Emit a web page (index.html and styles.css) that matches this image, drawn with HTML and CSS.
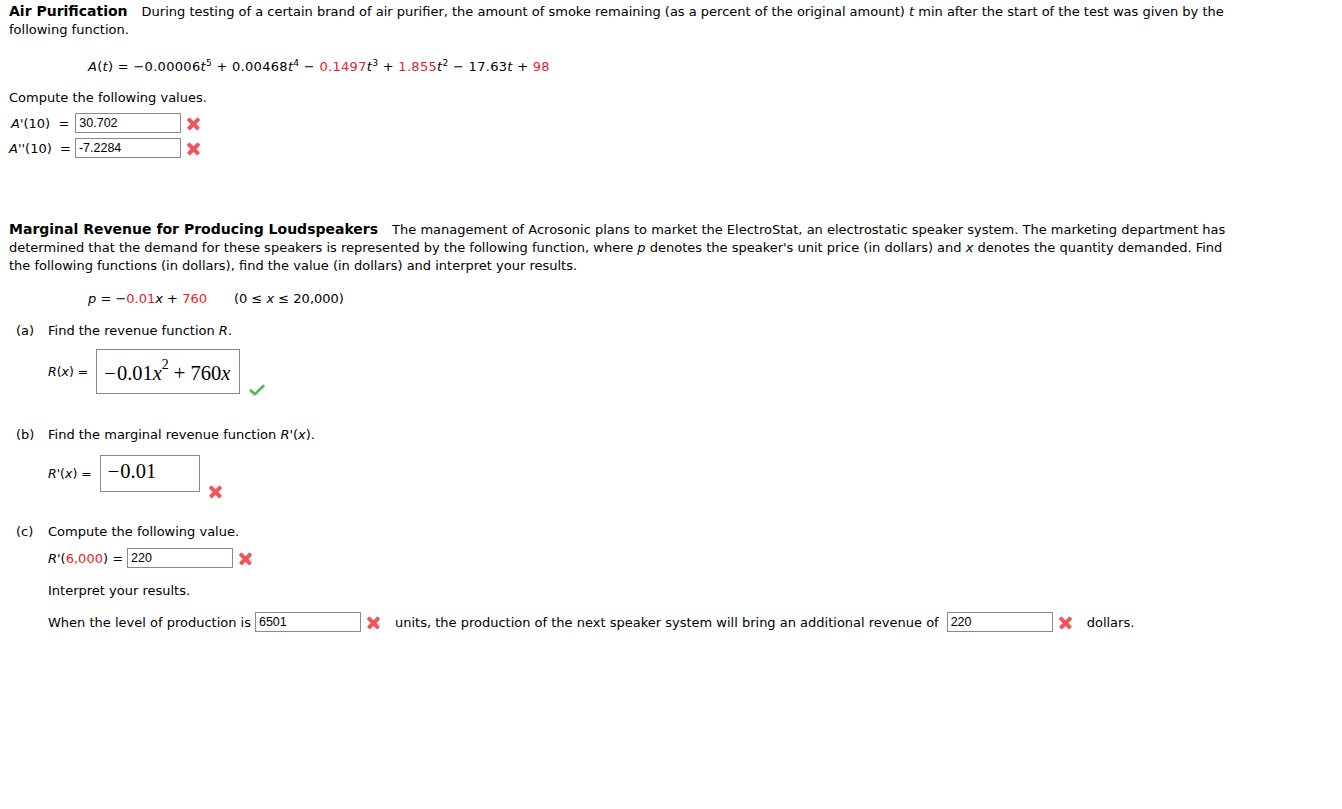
FILE: index.html
```html
<!DOCTYPE html>
<html>
<head>
<meta charset="utf-8">
<link rel="stylesheet" href="styles.css">
</head>
<body>
<div class="q">
  <p class="intro"><b class="title">Air Purification</b>During testing of a certain brand of air purifier, the amount of smoke remaining (as a percent of the original amount) <i>t</i> min after the start of the test was given by the following function.</p>
  <div class="formula f1"><i>A</i>(<i>t</i>) = −0.00006<i>t</i><sup>5</sup> + 0.00468<i>t</i><sup>4</sup> − <span class="red">0.1497</span><i>t</i><sup>3</sup> + <span class="red">1.855</span><i>t</i><sup>2</sup> − 17.63<i>t</i> + <span class="red">98</span></div>
  <p class="plain">Compute the following values.</p>
  <div class="row r1"><span class="lbl"><i>A</i>'(10)&nbsp; = </span><span class="inp w106">30.702</span><span class="x"></span></div>
  <div class="row r2"><span class="lbl"><i>A</i>''(10)&nbsp; = </span><span class="inp w106">-7.2284</span><span class="x"></span></div>
</div>

<div class="q q2">
  <p class="intro"><b class="title">Marginal Revenue for Producing Loudspeakers</b>The management of Acrosonic plans to market the ElectroStat, an electrostatic speaker system. The marketing department has determined that the demand for these speakers is represented by the following function, where <i>p</i> denotes the speaker's unit price (in dollars) and <i>x</i> denotes the quantity demanded. Find the following functions (in dollars), find the value (in dollars) and interpret your results.</p>
  <div class="formula f2"><span><i>p</i> = −<span class="red">0.01</span><i>x</i> + <span class="red">760</span></span><span class="range">(0 ≤ <i>x</i> ≤ 20,000)</span></div>

  <div class="part pa">
    <div class="ptitle"><span class="plab">(a)</span>Find the revenue function <i>R</i>.</div>
    <div class="mrow ma">
      <span class="sm"><i>R</i>(<i>x</i>) = </span>
      <span class="mbox ba"><span class="mm"><span class="op0">−</span>0.01<i>x</i><sup>2</sup><span class="op">+</span>760<i>x</i></span></span>
      <span class="chk"><svg width="16" height="12" viewBox="0 0 16 12"><path d="M1.8 6.6 L5.9 10.3 L14.3 2" fill="none" stroke="#5cb85c" stroke-width="2.8" stroke-linejoin="round" stroke-linecap="round"/></svg></span>
    </div>
  </div>

  <div class="part pb">
    <div class="ptitle"><span class="plab">(b)</span>Find the marginal revenue function <i>R</i>'(<i>x</i>).</div>
    <div class="mrow mb">
      <span class="sm"><i>R</i>'(<i>x</i>) = </span>
      <span class="mbox bb"><span class="mm"><span class="op0">−</span>0.01</span></span>
      <span class="x xb"></span>
    </div>
  </div>

  <div class="part pc">
    <div class="ptitle"><span class="plab">(c)</span>Compute the following value.</div>
    <div class="sub">
      <div class="row rc"><span class="lbl"><i>R</i>'(<span class="red">6,000</span>) = </span><span class="inp w106">220</span><span class="x"></span></div>
      <p class="plain interp">Interpret your results.</p>
      <div class="row rw">When the level of production is <span class="inp w106">6501</span><span class="x"></span><span class="gap">units, the production of the next speaker system will bring an additional revenue of</span> <span class="inp w106">220</span><span class="x"></span><span class="gap">dollars.</span></div>
    </div>
  </div>
</div>
</body>
</html>
```

FILE: styles.css
```css
body {
  margin: 0;
  padding: 0 9px;
  font-family: "DejaVu Sans", Verdana, sans-serif;
  font-size: 13px;
  color: #000;
  background: #fff;
}
p { margin: 0; }
.q { padding-top: 1px; width: 1238px; }
.q:first-child { padding-top: 2px; }
.intro { line-height: 18px; }
.title { font-size: 14px; margin-right: 14px; }
.red { color: #e8202a; }
.formula { margin-left: 79px; }
.f1 { margin-top: 19px; height: 18px; line-height: 18px; letter-spacing: 0.3px; }
sup { font-size: 70%; vertical-align: 5px; line-height: 0; }
.plain { line-height: 18px; }
.f1 + .plain { margin-top: 13px; }
.row { display: flex; align-items: center; white-space: nowrap; }
.r1 { margin-top: 6px; margin-left: 2px; }
.r2 { margin-top: 5px; margin-left: 0; }
.r1 .lbl { margin-right: 6px; }
.r2 .lbl { margin-right: 4px; }
.lbl { margin-right: 4px; }
.inp {
  display: inline-block;
  box-sizing: border-box;
  height: 20px;
  border: 1px solid #8a8a8a;
  padding: 0 3px;
  font-family: "Liberation Sans", Arial, sans-serif;
  font-size: 12.5px;
  line-height: 18px;
}
.w106 { width: 106px; }
.x {
  display: inline-block;
  width: 13px; height: 13px;
  margin-left: 6px;
  position: relative;
}
.x::before, .x::after {
  content: "";
  position: absolute;
  left: -1px; top: 5px;
  width: 15px; height: 3.6px;
  background: #f0545e;
  border-radius: 1px;
}
.x::before { transform: rotate(45deg); }
.x::after { transform: rotate(-45deg); }

.q2 { margin-top: 61px; }
.f2 { margin-top: 15px; line-height: 18px; display: flex; }
.range { margin-left: 27px; }

.part { margin-left: 7px; }
.ptitle { line-height: 18px; }
.plab { display: inline-block; width: 32px; }
.pa { margin-top: 14px; }
.mrow { display: flex; align-items: center; margin-left: 32px; }
.sm { font-size: 12.5px; margin-right: 8px; }
.mbox {
  display: inline-flex;
  align-items: center;
  box-sizing: border-box;
  border: 1px solid #8a8a8a;
  font-family: "Liberation Serif", "Times New Roman", serif;
  font-size: 20.5px;
  padding: 0 6px 0 7px;
}
.mm { white-space: nowrap; }
.mm i { font-style: italic; }
.mm sup { font-size: 68%; vertical-align: 11px; margin-left: 0; }
.op { margin: 0 5px; }
.op0 { margin-right: 1px; }
.ba { width: 144px; height: 45px; padding-top: 4px; }
.bb { width: 100px; height: 37px; align-items: flex-start; padding-top: 4px; }
.ma { margin-top: 9px; }
.chk { align-self: flex-end; margin-left: 9px; margin-bottom: -5px; }
.mb { margin-top: 11px; }
.xb { align-self: flex-end; margin-left: 9px; margin-bottom: -6px; }
.pb { margin-top: 32px; }
.pc { margin-top: 31px; }
.sub { margin-left: 32px; }
.rc { margin-top: 7px; }
.interp { margin-top: 14px; }
.rw { margin-top: 12px; }
.rw .inp { margin-left: 4px; }
.gap { margin-left: 15px; margin-right: 4px; }
```
